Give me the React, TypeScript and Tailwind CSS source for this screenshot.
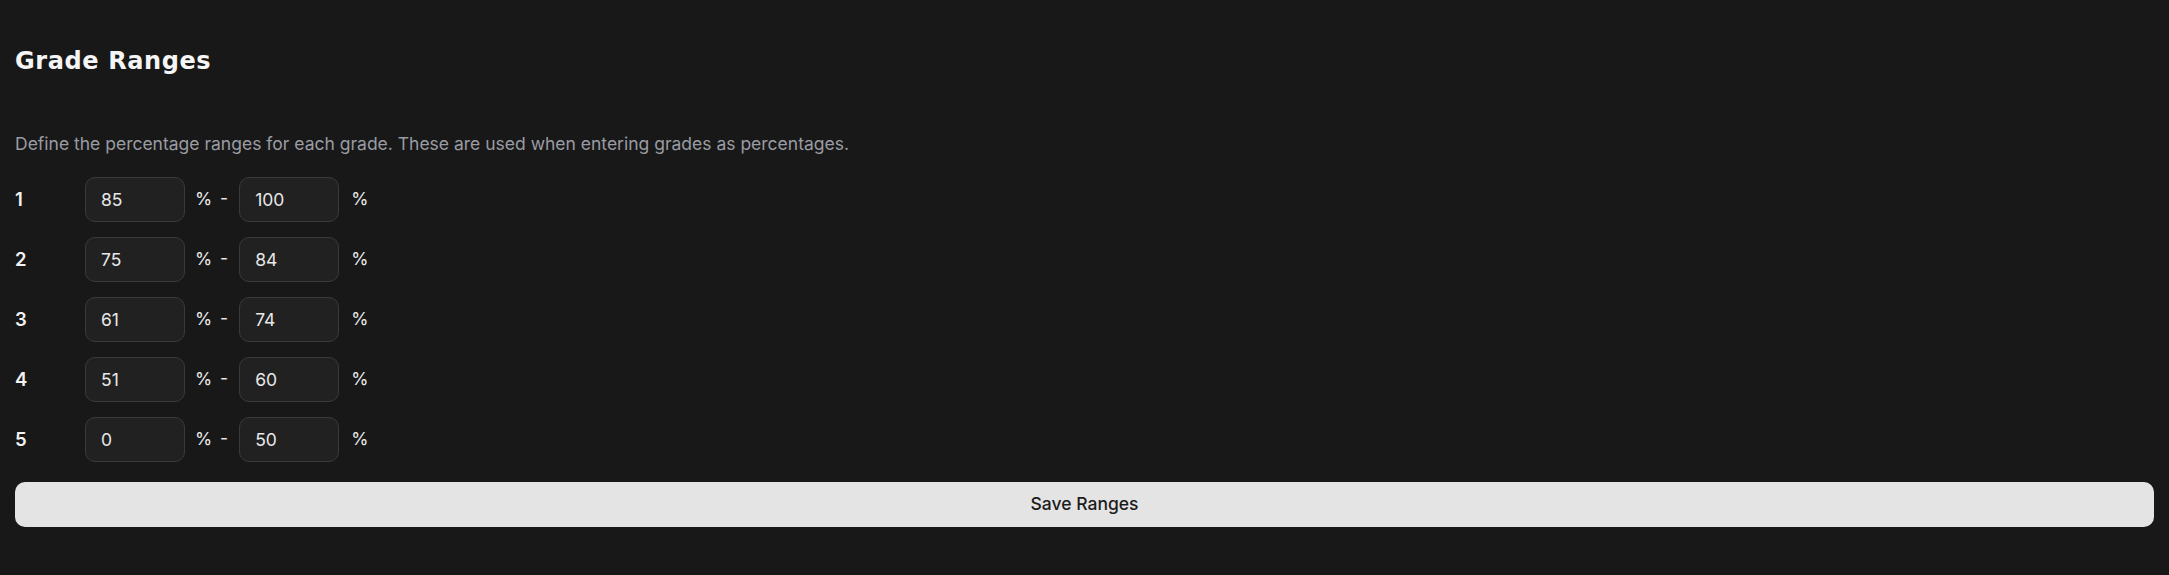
const ranges = [
  { grade: '1', min: '85', max: '100' },
  { grade: '2', min: '75', max: '84' },
  { grade: '3', min: '61', max: '74' },
  { grade: '4', min: '51', max: '60' },
  { grade: '5', min: '0', max: '50' },
];

function RangeRow({ grade, min, max }: { grade: string; min: string; max: string }) {
  return (
    <div className="flex h-[45px] items-center">
      <span className="w-[70px] text-[18.5px] font-semibold text-[#f2f2f2]">{grade}</span>
      <input
        defaultValue={min}
        className="h-[45px] w-[100px] rounded-[10px] border border-[#3a3a3a] bg-[#212121] px-[15px] text-[17.5px] text-[#e8e8e8] outline-none"
      />
      <span className="ml-[10px] mr-[11px] text-[17.5px] [word-spacing:3px] text-[#e8e8e8]">% -</span>
      <input
        defaultValue={max}
        className="h-[45px] w-[100px] rounded-[10px] border border-[#3a3a3a] bg-[#212121] px-[15px] text-[17.5px] text-[#e8e8e8] outline-none"
      />
      <span className="ml-[12px] text-[17.5px] text-[#e8e8e8]">%</span>
    </div>
  );
}

export default function App() {
  return (
    <div className="min-h-screen bg-[#181818] px-[15px] pt-[46px] font-['Inter','Liberation_Sans',sans-serif]">
      <h2 className="font-['DejaVu_Sans',sans-serif] text-[24px] leading-[30px] font-bold tracking-[0.025em] text-[#f5f5f5]">
        Grade Ranges
      </h2>
      <p className="mt-[55px] text-[17.5px] leading-[26px] text-[#9a9ca3]">
        Define the percentage ranges for each grade. These are used when entering grades as percentages.
      </p>
      <div className="mt-[20px] flex flex-col gap-[15px]">
        {ranges.map((r) => (
          <RangeRow key={r.grade} {...r} />
        ))}
      </div>
      <button className="mt-[20px] h-[45px] w-full rounded-[10px] bg-[#e4e4e4] text-[17.5px] font-medium text-[#1c1c1c]">
        Save Ranges
      </button>
    </div>
  );
}
